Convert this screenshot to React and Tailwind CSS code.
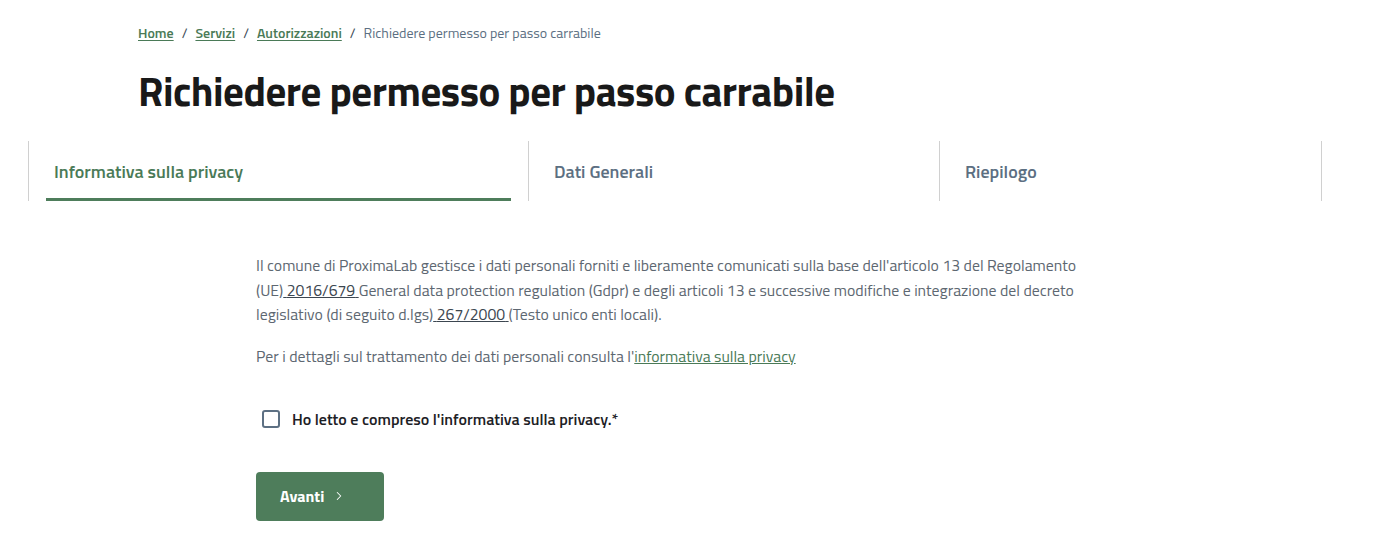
import { ChevronRight } from "lucide-react";

const font = { fontFamily: '"Titillium Web", Lato, "Noto Sans", sans-serif' };

function Breadcrumb() {
  const links = ["Home", "Servizi", "Autorizzazioni"];
  return (
    <nav className="flex items-center text-[14px] text-[#5c6f82]">
      {links.map((l) => (
        <span key={l} className="flex items-center">
          <a href="#" className="font-semibold text-[#4a7a57] underline underline-offset-2">
            {l}
          </a>
          <span className="px-[8px] text-[#3d4b57]">/</span>
        </span>
      ))}
      <span>Richiedere permesso per passo carrabile</span>
    </nav>
  );
}

function Tabs() {
  const tabs = [
    { label: "Informativa sulla privacy", w: "w-[500px]", active: true },
    { label: "Dati Generali", w: "w-[411px]" },
    { label: "Riepilogo", w: "w-[383px] border-r" },
  ];
  return (
    <div className="flex pl-[28px]">
      {tabs.map((t) => (
        <div
          key={t.label}
          className={`${t.w} h-[60px] border-l border-[#d0d0d0] relative flex items-center pl-[25px] text-[18px] font-semibold ${
            t.active ? "text-[#4a7a57]" : "text-[#5c6f82]"
          }`}
        >
          {t.label}
          {t.active && (
            <div className="absolute left-[17px] right-[17px] bottom-0 h-[3px] bg-[#4e7d5b]" />
          )}
        </div>
      ))}
    </div>
  );
}

export default function App() {
  return (
    <div className="bg-white w-[1375px] h-[554px] overflow-hidden" style={font}>
      <div className="pl-[138px] pt-[22px]">
        <Breadcrumb />
        <h1 className="mt-[24px] text-[41px] leading-[48px] font-bold text-[#191919] tracking-[-0.5px]">
          Richiedere permesso per passo carrabile
        </h1>
      </div>

      <div className="mt-[26px]">
        <Tabs />
      </div>

      <div className="pl-[256px] pt-[52px] w-[1098px] text-[15.8px] leading-[24.5px] text-[#5d6771]">
        <p>
          Il comune di ProximaLab gestisce i dati personali forniti e liberamente comunicati sulla base dell'articolo 13 del Regolamento
          (UE)
          <a href="#" className="underline text-[#3c4650]">
            {" "}2016/679{" "}
          </a>
          General data protection regulation (Gdpr) e degli articoli 13 e successive modifiche e integrazione del decreto legislativo (di
          seguito d.lgs)
          <a href="#" className="underline text-[#3c4650]">
            {" "}267/2000{" "}
          </a>
          (Testo unico enti locali).
        </p>
        <p className="mt-[17px]">
          Per i dettagli sul trattamento dei dati personali consulta l'
          <a href="#" className="underline text-[#4a7a57]">
            informativa sulla privacy
          </a>
        </p>

        <label className="mt-[39px] flex items-center gap-[12px] pl-[6px] text-[16px] font-semibold text-[#1c2024]">
          <span className="w-[18px] h-[18px] rounded-[3px] border-2 border-[#5d7083] bg-white" />
          Ho letto e compreso l'informativa sulla privacy.*
        </label>

        <button className="mt-[40px] w-[128px] h-[49px] rounded-[4px] bg-[#4e7d5b] text-white font-bold text-[16px] flex items-center pl-[24px] gap-[8px]">
          Avanti
          <ChevronRight size={14} strokeWidth={1.75} />
        </button>
      </div>
    </div>
  );
}
